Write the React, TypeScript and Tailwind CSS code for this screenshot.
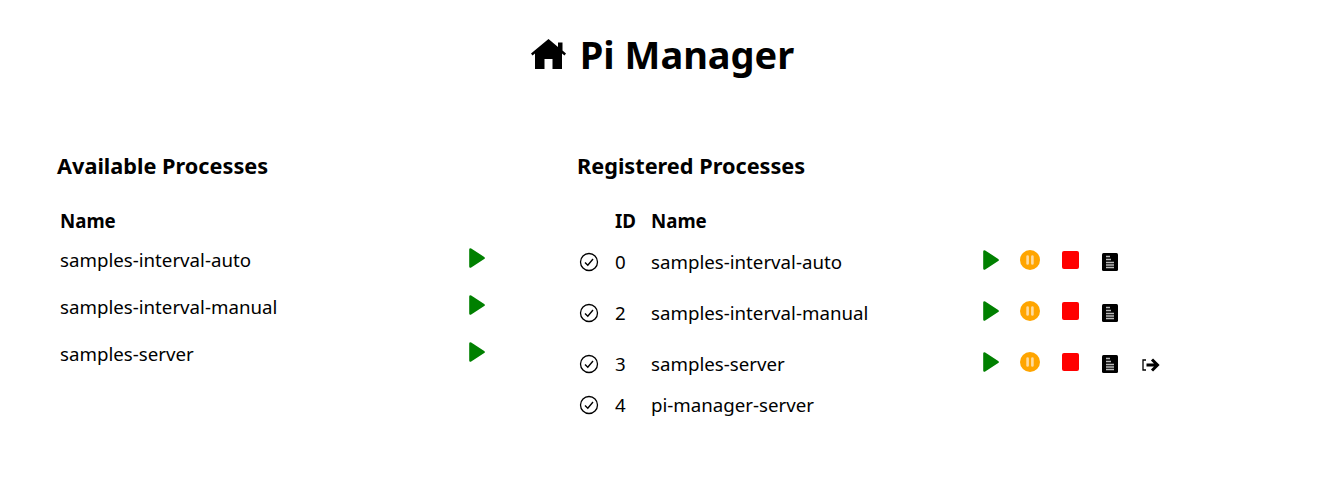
const Play = () => (
  <svg width="16" height="20" viewBox="0 0 16 20" className="block">
    <path d="M1.500 1.500 14.500 10 1.500 18.500Z" fill="#008000" stroke="#008000" strokeWidth="2.600" strokeLinejoin="round" />
  </svg>
);
const Pause = () => (
  <svg width="20" height="20" viewBox="0 0 20 20" className="block">
    <circle cx="10" cy="10" r="10" fill="#ffa500" />
    <path d="M7.600 6.500v7M12.400 6.500v7" stroke="#ffdca0" strokeWidth="2.600" strokeLinecap="round" />
  </svg>
);
const Stop = () => <div className="h-[18px] w-[17px] rounded-[2px] bg-[#ff0000]" />;
const Doc = () => (
  <svg width="16" height="18" viewBox="0 0 16 18" className="block">
    <rect width="16" height="18" rx="1.500" fill="#000" />
    <path d="M4 3.500h4M4 6.500h5M4 9.500h8M4 12h8M4 14.500h8" stroke="#bbb" strokeWidth="1.300" />
  </svg>
);
const Exit = () => (
  <svg width="18" height="14" viewBox="0 0 18 14" className="block" fill="none" stroke="#000">
    <path d="M4 2H1v10h3" strokeWidth="1.300" />
    <path d="M4.500 7h11M10 1.500 15.500 7l-5.500 5.500" strokeWidth="3" />
  </svg>
);
const Home = () => (
  <svg width="35" height="30" viewBox="0 0 35 30" className="block">
    <path d="M17.500 0 27 8V3.500h4.500V11.500L35 14.500 33.500 16.500 31 14.500V30H21.500V20H13.500V30H4V14.500L1.500 16.500 0 14.500Z" fill="#000" />
  </svg>
);
const Actions = ({ exit }: { exit?: boolean }) => (
  <div className="flex items-start">
    <div className="w-[37px]"><Play /></div>
    <div className="w-[42px]"><Pause /></div>
    <div className="w-[40px] pt-[1px]"><Stop /></div>
    <div className="w-[40px] pt-[3px]"><Doc /></div>
    {exit && <div className="pt-[6px]"><Exit /></div>}
  </div>
);

const left = ["samples-interval-auto", "samples-interval-manual", "samples-server"];
const right = [
  { id: 0, name: "samples-interval-auto", h: "h-[51px]" },
  { id: 2, name: "samples-interval-manual", h: "h-[51px]" },
  { id: 3, name: "samples-server", h: "h-[51px]", exit: true },
  { id: 4, name: "pi-manager-server", h: "h-[31px]", none: true },
];

const Check = () => (
  <svg width="20" height="20" viewBox="0 0 20 20" className="ml-[2px] block" fill="none" stroke="#000">
    <circle cx="10" cy="10" r="8.500" strokeWidth="1.300" />
    <path d="M6 10.500 8.800 13.200 14 7" strokeWidth="1.400" />
  </svg>
);

export default function App() {
  return (
    <div className="h-[483px] bg-white text-black font-['Noto_Sans','Open_Sans',sans-serif]">
      <h1 className="flex items-center justify-center gap-[14px] pt-[29px] pl-[5px] text-[38px] leading-[50px] font-bold">
        <Home />
        <span>Pi Manager</span>
      </h1>
      <div className="flex pt-[73px] pl-[57px]">
        <section className="w-[520px]">
          <h2 className="text-[21.7px] leading-[28px] font-bold">Available Processes</h2>
          <div className="mt-[27px] pl-[3px] text-[18.700px] font-bold leading-[28px]">Name</div>
          <div className="mt-[1px] w-[428px]">
            {left.map((n) => (
              <div key={n} className="flex h-[47px] items-center justify-between pl-[3px] text-[18.700px]">
                <span className="pt-[2px]">{n}</span>
                <span className="-mt-[4px]"><Play /></span>
              </div>
            ))}
          </div>
        </section>
        <section>
          <h2 className="text-[21.7px] leading-[28px] font-bold">Registered Processes</h2>
          <div className="mt-[27px] flex text-[18.700px] font-bold leading-[28px]">
            <div className="w-[38px]" />
            <div className="w-[36px]">ID</div>
            <div>Name</div>
          </div>
          <div className="mt-[1px] text-[18.700px]">
            {right.map((r) => (
              <div key={r.id} className={`flex items-center ${r.h}`}>
                <div className="w-[38px]"><Check /></div>
                <div className="w-[36px] pt-[2px]">{r.id}</div>
                <div className="w-[332px] pt-[2px]">{r.name}</div>
                {!r.none && <div className="-mt-[2px]"><Actions exit={r.exit} /></div>}
              </div>
            ))}
          </div>
        </section>
      </div>
    </div>
  );
}
